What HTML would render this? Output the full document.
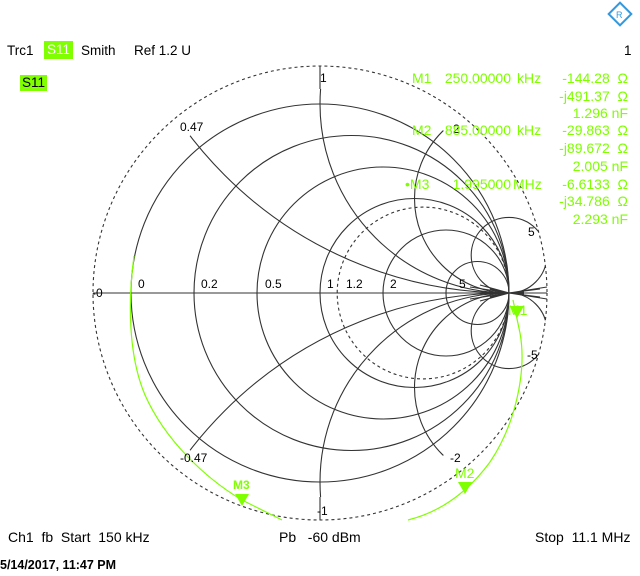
<!DOCTYPE html>
<html><head><meta charset="utf-8"><style>
html,body{margin:0;padding:0;background:#fff;width:640px;height:576px;overflow:hidden}
body{position:relative;font-family:"Liberation Sans",Arial,sans-serif}
svg{display:block}
.t{position:absolute;font-size:13.5px;line-height:15px;white-space:nowrap;color:#000}
.g{color:#7fff00;font-size:14px}
.r{text-align:right}
.b{font-size:14px}
</style></head><body>
<svg width="640" height="576" style="position:absolute;left:0;top:0" xmlns="http://www.w3.org/2000/svg">
<defs>
<clipPath id="cr"><circle cx="320" cy="293" r="204"/></clipPath>
<clipPath id="cd"><circle cx="320" cy="293" r="227"/></clipPath>
</defs>
<g fill="none" stroke="#333" stroke-width="1.1">
<circle cx="320" cy="293" r="227" stroke-dasharray="3,3"/>
<circle cx="320" cy="293" r="189"/>
<circle cx="351.5" cy="293" r="157.5"/>
<circle cx="383" cy="293" r="126"/>
<circle cx="414.5" cy="293" r="94.5"/>
<circle cx="423.1" cy="293" r="85.9" stroke-dasharray="3,3"/>
<circle cx="446" cy="293" r="63"/>
<circle cx="477.5" cy="293" r="31.5"/>
<g clip-path="url(#cr)">
<circle cx="509" cy="-109" r="402"/>
<circle cx="509" cy="695" r="402"/>
<circle cx="509" cy="104" r="189"/>
<circle cx="509" cy="482" r="189"/>
<circle cx="509" cy="198.5" r="94.5"/>
<circle cx="509" cy="387.5" r="94.5"/>
</g>
<g clip-path="url(#cd)">
<circle cx="509" cy="255.2" r="37.8"/>
<circle cx="509" cy="330.8" r="37.8"/>
</g>
<path d="M470,287 L509,293 L470,299 M480,285 L509,293 L480,301 M490,289 L509,293 L490,297 M547,287 L509,293 L547,299 M540,289 L509,293 L540,297"/>
<line x1="93" y1="293" x2="547" y2="293"/>
<line x1="320" y1="66" x2="320" y2="89"/>
<line x1="320" y1="497" x2="320" y2="520"/>
</g>
<g fill="none" stroke="#80ff00" stroke-width="1.2">
<path d="M134,256 C128,300 128,355 145,395 C165,440 205,478 242,500 C258,508 270,514 282,520"/>
<path d="M408,520 C440,512 468,492 490,462 C515,425 527,372 520,333 L513,300"/>
</g>
<g fill="#80ff00">
<polygon points="235,494 249,494 242,506"/>
<polygon points="458,482 472,482 465,494"/>
<polygon points="510,306 524,306 517,318"/>
</g>
<g transform="translate(620,14) rotate(45)">
<rect x="-8" y="-8" width="16" height="16" fill="none" stroke="#3399dd" stroke-width="2"/>
</g>
<text x="616" y="18" font-size="9" fill="#3399dd" font-family="Liberation Sans">R</text>
</svg>
<div class="t" style="left:7px;top:43px">Trc1</div>
<div class="t" style="left:44px;top:41px;width:29px;height:18px;background:#80ff00;color:#fff;line-height:18px;text-align:center">S11</div>
<div class="t" style="left:81px;top:43px">Smith</div>
<div class="t" style="left:134px;top:43px">Ref 1.2 U</div>
<div class="t" style="left:624px;top:43px">1</div>
<div class="t" style="left:20px;top:75px;width:27px;height:16px;background:#80ff00;line-height:16px;text-align:center">S11</div>

<div class="t" style="font-size:12px;left:138px;top:277px">0</div>
<div class="t" style="font-size:12px;left:201px;top:277px">0.2</div>
<div class="t" style="font-size:12px;left:265px;top:277px">0.5</div>
<div class="t" style="font-size:12px;left:327px;top:277px">1</div>
<div class="t" style="font-size:12px;left:346px;top:277px">1.2</div>
<div class="t" style="font-size:12px;left:390px;top:277px">2</div>
<div class="t" style="font-size:12px;left:459px;top:277px">5</div>
<div class="t" style="font-size:12px;left:92px;top:286px">-0</div>
<div class="t" style="font-size:12px;left:320px;top:71px">1</div>
<div class="t" style="font-size:12px;left:180px;top:120px">0.47</div>
<div class="t" style="font-size:12px;left:453px;top:122px">2</div>
<div class="t" style="font-size:12px;left:528px;top:225px">5</div>
<div class="t" style="font-size:12px;left:527px;top:348px">-5</div>
<div class="t" style="font-size:12px;left:450px;top:451px">-2</div>
<div class="t" style="font-size:12px;left:180px;top:451px">-0.47</div>
<div class="t" style="font-size:12px;left:317px;top:504px">-1</div>

<div class="t g" style="left:233px;top:478px;font-weight:bold;font-size:12px">M3</div>
<div class="t g" style="left:455px;top:466px">M2</div>
<div class="t g" style="left:508px;top:303px">M1</div>

<div class="t g" style="left:412px;top:71px">M1</div>
<div class="t g" style="left:412px;top:123px">M2</div>
<div class="t g" style="left:405px;top:177px">•M3</div>
<div class="t g r" style="right:129px;top:71px">250.00000</div>
<div class="t g r" style="right:129px;top:123px">885.00000</div>
<div class="t g r" style="right:129px;top:177px">1.995000</div>
<div class="t g" style="left:517px;top:71px">kHz</div>
<div class="t g" style="left:517px;top:123px">kHz</div>
<div class="t g" style="left:513px;top:177px">MHz</div>
<div class="t g r" style="right:12px;top:71px">-144.28&nbsp; Ω</div>
<div class="t g r" style="right:12px;top:89px">-j491.37&nbsp; Ω</div>
<div class="t g r" style="right:12px;top:106px">1.296 nF</div>
<div class="t g r" style="right:12px;top:123px">-29.863&nbsp; Ω</div>
<div class="t g r" style="right:12px;top:141px">-j89.672&nbsp; Ω</div>
<div class="t g r" style="right:12px;top:159px">2.005 nF</div>
<div class="t g r" style="right:12px;top:177px">-6.6133&nbsp; Ω</div>
<div class="t g r" style="right:12px;top:194px">-j34.786&nbsp; Ω</div>
<div class="t g r" style="right:12px;top:212px">2.293 nF</div>

<div class="t b" style="left:8px;top:530px">Ch1&nbsp; fb&nbsp; Start&nbsp; 150 kHz</div>
<div class="t b" style="left:279px;top:530px">Pb&nbsp;&nbsp; -60 dBm</div>
<div class="t b" style="left:535px;top:530px">Stop&nbsp; 11.1 MHz</div>
<div class="t" style="left:0px;top:558px;font-size:12.5px;font-weight:bold;line-height:14px">5/14/2017, 11:47 PM</div>
</body></html>
